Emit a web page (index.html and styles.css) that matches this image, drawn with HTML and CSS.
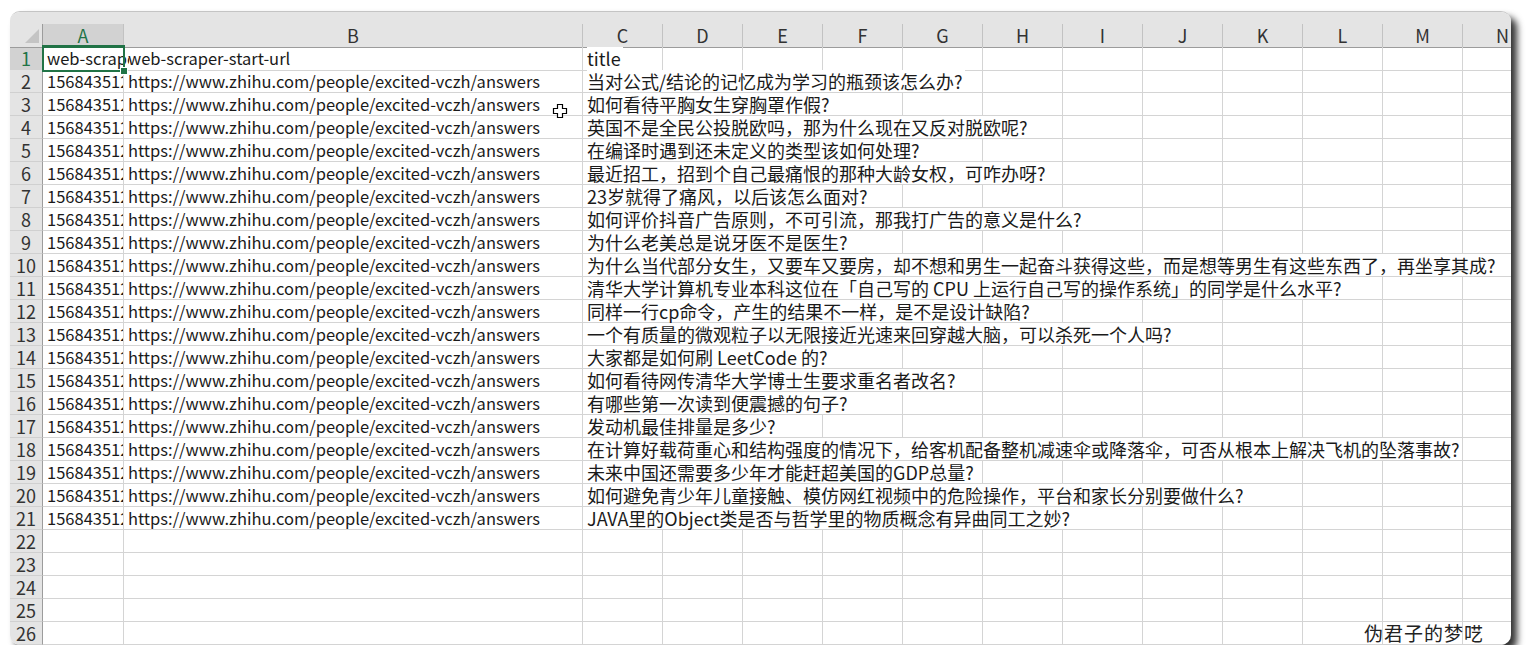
FILE: index.html
```html
<!DOCTYPE html>
<html lang="zh-CN">
<head>
    <meta charset="UTF-8">
    <title>web-scraper 导出</title>
    <link rel="stylesheet" href="styles.css">
</head>
<body>
    <div class="page">
        <div class="window">
            <div class="band"></div>

            <!-- 列标题 -->
            <div class="row head">
                <div class="corner"><span class="tri"></span></div>
                <div class="col sel-col">A</div>
                <div class="col">B</div>
                <div class="col">C</div>
                <div class="col">D</div>
                <div class="col">E</div>
                <div class="col">F</div>
                <div class="col">G</div>
                <div class="col">H</div>
                <div class="col">I</div>
                <div class="col">J</div>
                <div class="col">K</div>
                <div class="col">L</div>
                <div class="col">M</div>
                <div class="col">N</div>
            </div>

            <div class="row">
                <div class="num sel-num">1</div>
                <div class="cell a1">web-scraper-order<span class="selbox"><i class="handle"></i></span></div>
                <div class="cell">web-scraper-start-url</div>
                <div class="rest"><span>title</span></div>
            </div>
            <div class="row">
                <div class="num">2</div>
                <div class="cell">1568435123-1</div>
                <div class="cell">https://www.zhihu.com/people/excited-vczh/answers</div>
                <div class="rest"><span>当对公式/结论的记忆成为学习的瓶颈该怎么办?</span></div>
            </div>
            <div class="row">
                <div class="num">3</div>
                <div class="cell">1568435123-2</div>
                <div class="cell">https://www.zhihu.com/people/excited-vczh/answers</div>
                <div class="rest"><span>如何看待平胸女生穿胸罩作假?</span></div>
            </div>
            <div class="row">
                <div class="num">4</div>
                <div class="cell">1568435123-3</div>
                <div class="cell">https://www.zhihu.com/people/excited-vczh/answers</div>
                <div class="rest"><span>英国不是全民公投脱欧吗，那为什么现在又反对脱欧呢?</span></div>
            </div>
            <div class="row">
                <div class="num">5</div>
                <div class="cell">1568435123-4</div>
                <div class="cell">https://www.zhihu.com/people/excited-vczh/answers</div>
                <div class="rest"><span>在编译时遇到还未定义的类型该如何处理?</span></div>
            </div>
            <div class="row">
                <div class="num">6</div>
                <div class="cell">1568435123-5</div>
                <div class="cell">https://www.zhihu.com/people/excited-vczh/answers</div>
                <div class="rest"><span>最近招工，招到个自己最痛恨的那种大龄女权，可咋办呀?</span></div>
            </div>
            <div class="row">
                <div class="num">7</div>
                <div class="cell">1568435123-6</div>
                <div class="cell">https://www.zhihu.com/people/excited-vczh/answers</div>
                <div class="rest"><span>23岁就得了痛风，以后该怎么面对?</span></div>
            </div>
            <div class="row">
                <div class="num">8</div>
                <div class="cell">1568435123-7</div>
                <div class="cell">https://www.zhihu.com/people/excited-vczh/answers</div>
                <div class="rest"><span>如何评价抖音广告原则，不可引流，那我打广告的意义是什么?</span></div>
            </div>
            <div class="row">
                <div class="num">9</div>
                <div class="cell">1568435123-8</div>
                <div class="cell">https://www.zhihu.com/people/excited-vczh/answers</div>
                <div class="rest"><span>为什么老美总是说牙医不是医生?</span></div>
            </div>
            <div class="row">
                <div class="num">10</div>
                <div class="cell">1568435123-9</div>
                <div class="cell">https://www.zhihu.com/people/excited-vczh/answers</div>
                <div class="rest"><span>为什么当代部分女生，又要车又要房，却不想和男生一起奋斗获得这些，而是想等男生有这些东西了，再坐享其成?</span></div>
            </div>
            <div class="row">
                <div class="num">11</div>
                <div class="cell">1568435124-10</div>
                <div class="cell">https://www.zhihu.com/people/excited-vczh/answers</div>
                <div class="rest"><span>清华大学计算机专业本科这位在「自己写的 CPU 上运行自己写的操作系统」的同学是什么水平?</span></div>
            </div>
            <div class="row">
                <div class="num">12</div>
                <div class="cell">1568435124-11</div>
                <div class="cell">https://www.zhihu.com/people/excited-vczh/answers</div>
                <div class="rest"><span>同样一行cp命令，产生的结果不一样，是不是设计缺陷?</span></div>
            </div>
            <div class="row">
                <div class="num">13</div>
                <div class="cell">1568435124-12</div>
                <div class="cell">https://www.zhihu.com/people/excited-vczh/answers</div>
                <div class="rest"><span>一个有质量的微观粒子以无限接近光速来回穿越大脑，可以杀死一个人吗?</span></div>
            </div>
            <div class="row">
                <div class="num">14</div>
                <div class="cell">1568435124-13</div>
                <div class="cell">https://www.zhihu.com/people/excited-vczh/answers</div>
                <div class="rest"><span>大家都是如何刷 LeetCode 的?</span></div>
            </div>
            <div class="row">
                <div class="num">15</div>
                <div class="cell">1568435124-14</div>
                <div class="cell">https://www.zhihu.com/people/excited-vczh/answers</div>
                <div class="rest"><span>如何看待网传清华大学博士生要求重名者改名?</span></div>
            </div>
            <div class="row">
                <div class="num">16</div>
                <div class="cell">1568435124-15</div>
                <div class="cell">https://www.zhihu.com/people/excited-vczh/answers</div>
                <div class="rest"><span>有哪些第一次读到便震撼的句子?</span></div>
            </div>
            <div class="row">
                <div class="num">17</div>
                <div class="cell">1568435124-16</div>
                <div class="cell">https://www.zhihu.com/people/excited-vczh/answers</div>
                <div class="rest"><span>发动机最佳排量是多少?</span></div>
            </div>
            <div class="row">
                <div class="num">18</div>
                <div class="cell">1568435124-17</div>
                <div class="cell">https://www.zhihu.com/people/excited-vczh/answers</div>
                <div class="rest"><span>在计算好载荷重心和结构强度的情况下，给客机配备整机减速伞或降落伞，可否从根本上解决飞机的坠落事故?</span></div>
            </div>
            <div class="row">
                <div class="num">19</div>
                <div class="cell">1568435124-18</div>
                <div class="cell">https://www.zhihu.com/people/excited-vczh/answers</div>
                <div class="rest"><span>未来中国还需要多少年才能赶超美国的GDP总量?</span></div>
            </div>
            <div class="row">
                <div class="num">20</div>
                <div class="cell">1568435124-19</div>
                <div class="cell">https://www.zhihu.com/people/excited-vczh/answers</div>
                <div class="rest"><span>如何避免青少年儿童接触、模仿网红视频中的危险操作，平台和家长分别要做什么?</span></div>
            </div>
            <div class="row">
                <div class="num">21</div>
                <div class="cell">1568435124-20</div>
                <div class="cell">https://www.zhihu.com/people/excited-vczh/answers</div>
                <div class="rest"><span>JAVA里的Object类是否与哲学里的物质概念有异曲同工之妙?</span></div>
            </div>
            <div class="row">
                <div class="num">22</div>
                <div class="cell"></div>
                <div class="cell"></div>
                <div class="rest"></div>
            </div>
            <div class="row">
                <div class="num">23</div>
                <div class="cell"></div>
                <div class="cell"></div>
                <div class="rest"></div>
            </div>
            <div class="row">
                <div class="num">24</div>
                <div class="cell"></div>
                <div class="cell"></div>
                <div class="rest"></div>
            </div>
            <div class="row">
                <div class="num">25</div>
                <div class="cell"></div>
                <div class="cell"></div>
                <div class="rest"></div>
            </div>
            <div class="row">
                <div class="num">26</div>
                <div class="cell"></div>
                <div class="cell"></div>
                <div class="rest"></div>
            </div>

            <!-- 鼠标指针 -->
            <svg class="cursor" width="16" height="16" viewBox="0 0 16 16">
                <path d="M5.5 1.5h5v4h4v5h-4v4h-5v-4h-4v-5h4z" fill="#fff" stroke="#000" stroke-width="1.2"/>
            </svg>

            <div class="watermark">伪君子的梦呓</div>
        </div>
    </div>
</body>
</html>
```

FILE: styles.css
```css
/* 表格窗口 */
body {
    margin: 0;
    background: #fff;
    font-family: "Noto Sans CJK SC", sans-serif;
    color: #1a1a1a;
}

.page {
    padding: 11px 0 0 10px;
}

.window {
    position: relative;
    width: 1501px;
    height: 634px;
    box-sizing: border-box;
    border-top: 1px solid #c4c4c4;
    border-radius: 10px;
    overflow: hidden;
    background: #fff;
    box-shadow: 6px 6px 7px rgba(0, 0, 0, 0.8);
}

.band {
    height: 12px;
    background: #e4e4e4;
}

.row {
    display: grid;
    grid-template-columns: 33px 81px 459px repeat(12, 80px);
    height: 23px;
    font-size: 18px;
    line-height: 22px;
}

.row > div {
    box-sizing: border-box;
    white-space: nowrap;
}

/* 列标题 */
.head > div {
    background: #e4e4e4;
    border-right: 1px solid #c2c2c2;
    border-bottom: 1px solid #9c9c9c;
    text-align: center;
    color: #333;
}

.head .corner {
    position: relative;
    border-right: 1px solid #9c9c9c;
}

.tri {
    position: absolute;
    right: 3px;
    bottom: 4px;
    width: 0;
    height: 0;
    border-left: 14px solid transparent;
    border-bottom: 14px solid #c4c4c4;
}

.head .sel-col {
    background: #d2d2d2;
    color: #217346;
    border-bottom: 2px solid #217346;
}

/* 行号 */
.num {
    background: #e4e4e4;
    border-right: 1px solid #9c9c9c;
    border-bottom: 1px solid #d0d0d0;
    text-align: center;
    color: #333;
}

.num.sel-num {
    background: #d2d2d2;
    color: #217346;
}

.cell {
    padding-left: 4px;
    overflow: hidden;
    font-size: 16.5px;
    line-height: 23px;
    border-right: 1px solid #d4d4d4;
    border-bottom: 1px solid #d4d4d4;
}

.a1 {
    position: relative;
    overflow: visible;
    clip-path: inset(-3px -5px -5px -3px);
}

.selbox {
    position: absolute;
    left: -1px;
    top: -2px;
    right: -2px;
    bottom: -2px;
    border: 2px solid #217346;
    pointer-events: none;
}

.handle {
    position: absolute;
    right: -5px;
    bottom: -5px;
    width: 6px;
    height: 6px;
    background: #217346;
    border: 1px solid #fff;
}

/* C 列起向右溢出的文字 */
.rest {
    grid-column: 4 / -1;
    padding-left: 4px;
    border-bottom: 1px solid #d4d4d4;
    background: repeating-linear-gradient(to right, transparent 0 79px, #d4d4d4 79px 80px);
}

.rest span {
    display: inline-block;
    height: 22px;
    background: #fff;
    padding-right: 2px;
}

.cursor {
    position: absolute;
    left: 542px;
    top: 91px;
}

.watermark {
    position: absolute;
    right: 27px;
    bottom: 0;
    font-size: 19px;
    line-height: 24px;
    letter-spacing: 1px;
    color: #222;
}
```
